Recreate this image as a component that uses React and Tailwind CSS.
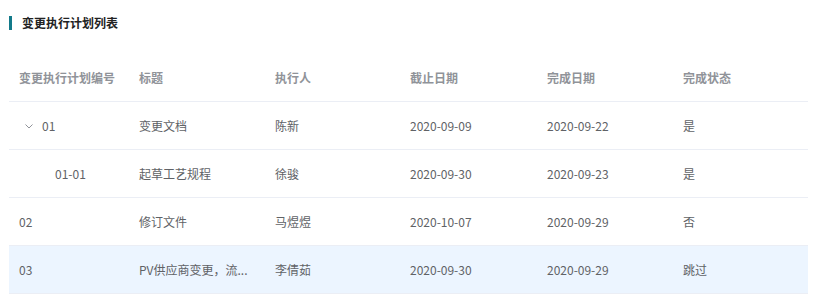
import React from "react";

const cols = "grid grid-cols-[120px_136px_135px_137px_136px_1fr]";

const rows = [
  { id: "01", title: "变更文档", person: "陈新", due: "2020-09-09", done: "2020-09-22", status: "是", expand: true },
  { id: "01-01", title: "起草工艺规程", person: "徐骏", due: "2020-09-30", done: "2020-09-23", status: "是", child: true },
  { id: "02", title: "修订文件", person: "马煜煜", due: "2020-10-07", done: "2020-09-29", status: "否" },
  { id: "03", title: "PV供应商变更，流...", person: "李倩茹", due: "2020-09-30", done: "2020-09-29", status: "跳过", hl: true },
];

export default function App() {
  return (
    <div className="w-[816px] h-[305px] bg-white overflow-hidden text-[12px]" style={{ fontFamily: '"Noto Sans CJK SC", "Noto Sans", sans-serif' }}>
      <div className="flex items-center h-[14px] mt-[16px] ml-[9px]">
        <div className="w-[3px] h-[14px] bg-[#137a8a]" />
        <div className="ml-[10px] font-bold text-[#222] leading-none">变更执行计划列表</div>
      </div>
      <div className="ml-[9px] mr-[8px] mt-[24px]">
        <div className={`${cols} h-[48px] items-center border-b border-[#ebeef5] text-[#909399] font-bold`}>
          <div className="pl-[10px]">变更执行计划编号</div>
          <div className="pl-[10px]">标题</div>
          <div className="pl-[10px]">执行人</div>
          <div className="pl-[10px]">截止日期</div>
          <div className="pl-[10px]">完成日期</div>
          <div className="pl-[10px]">完成状态</div>
        </div>
        {rows.map((r) => (
          <div key={r.id} className={`${cols} h-[48px] items-center border-b border-[#ebeef5] text-[#606266] ${r.hl ? "bg-[#ecf5ff]" : ""}`}>
            <div className="pl-[10px] flex items-center">
              {r.expand && (
                <svg width="10" height="10" viewBox="0 0 10 10" className="ml-[5px] mr-[8px]">
                  <path d="M1.5 3.5 L5 7 L8.5 3.5" fill="none" stroke="#909399" strokeWidth="1" />
                </svg>
              )}
              {r.child ? <span className="ml-[36px]">{r.id}</span> : <span>{r.id}</span>}
            </div>
            <div className="pl-[10px] whitespace-nowrap">{r.title}</div>
            <div className="pl-[10px]">{r.person}</div>
            <div className="pl-[10px]">{r.due}</div>
            <div className="pl-[10px]">{r.done}</div>
            <div className="pl-[10px]">{r.status}</div>
          </div>
        ))}
      </div>
    </div>
  );
}
